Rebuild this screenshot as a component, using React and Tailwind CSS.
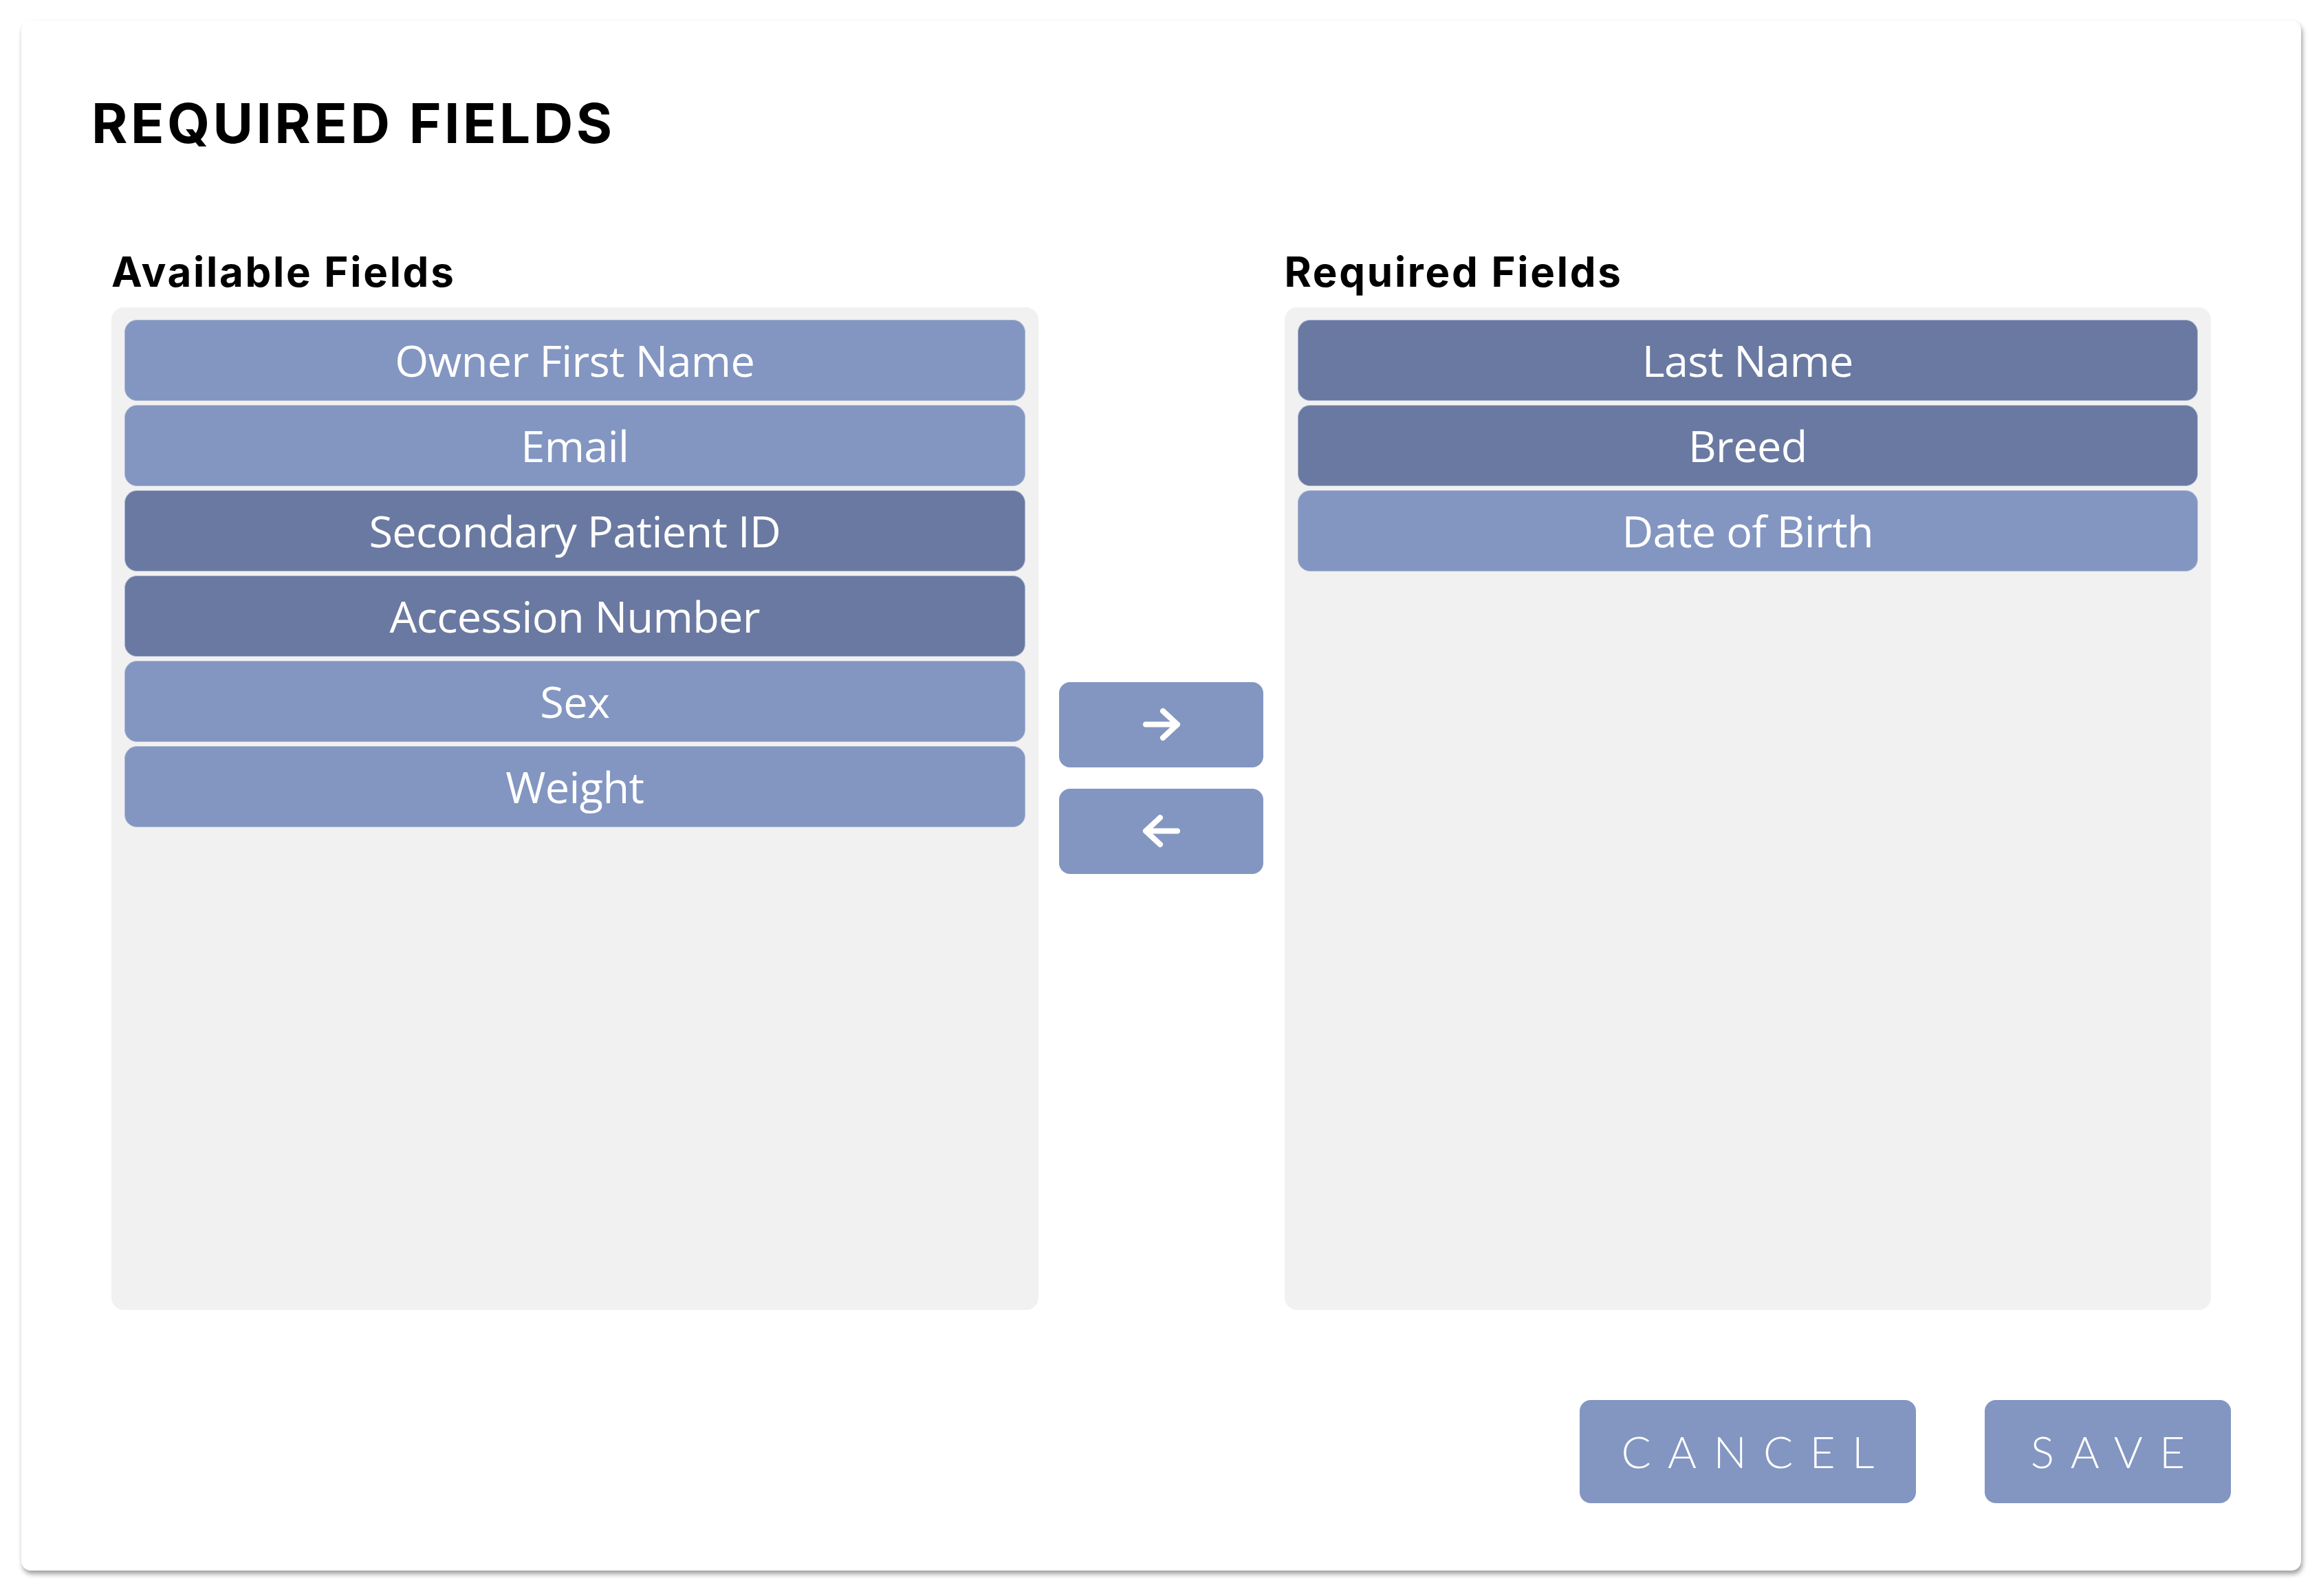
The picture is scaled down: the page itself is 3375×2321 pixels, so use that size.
import { useState } from "react";

const available = [
  { label: "Owner First Name", selected: false },
  { label: "Email", selected: false },
  { label: "Secondary Patient ID", selected: true },
  { label: "Accession Number", selected: true },
  { label: "Sex", selected: false },
  { label: "Weight", selected: false },
];

const required = [
  { label: "Last Name", selected: true },
  { label: "Breed", selected: true },
  { label: "Date of Birth", selected: false },
];

const headFont = { fontFamily: "Inter, 'Liberation Sans', sans-serif" };
const itemFont = { fontFamily: "'Open Sans', 'Noto Sans', sans-serif" };
const btnFont = { fontFamily: "Lato, 'Open Sans', sans-serif" };

function FieldList({ items }) {
  return (
    <div className="h-[1458px] rounded-[18px] bg-[#f1f1f1] px-[19px] pt-[18px] flex flex-col gap-[6px]">
      {items.map((it) => (
        <div
          key={it.label}
          className={`h-[118px] shrink-0 rounded-[18px] border border-[#aab6d3] flex items-center justify-center text-white text-[63px] tracking-[-0.01em] ${
            it.selected ? "bg-[#6a79a1]" : "bg-[#8396c1]"
          }`}
          style={itemFont}
        >
          {it.label}
        </div>
      ))}
    </div>
  );
}

function Arrow({ dir }) {
  const d =
    dir === "right"
      ? "M4 23.5 H50 M29 4 L50 23.5 L29 43"
      : "M50 23.5 H4 M25 4 L4 23.5 L25 43";
  return (
    <svg width="54" height="47" viewBox="0 0 54 47" className="overflow-visible">
      <path
        d={d}
        fill="none"
        stroke="white"
        strokeWidth="8"
        strokeLinecap="round"
        strokeLinejoin="round"
      />
    </svg>
  );
}

export default function App() {
  const [left] = useState(available);
  const [right] = useState(required);

  return (
    <div className="min-h-screen bg-white pt-[30px] pl-[31px]">
      <div className="w-[3315px] h-[2254px] rounded-[14px] bg-white shadow-[2px_5px_7px_rgba(0,0,0,0.38)] px-[102px] pt-[109px] flex flex-col">
        <h1 className="text-[80px] leading-none font-bold tracking-[0.055em] text-black" style={headFont}>
          REQUIRED FIELDS
        </h1>

        <div className="mt-[146px] px-[29px] grid grid-cols-[1fr_358px_1fr]">
          <h2 className="text-[60px] leading-none font-bold tracking-[0.045em] text-black mb-[22px]" style={headFont}>
            Available Fields
          </h2>
          <div />
          <h2 className="text-[60px] leading-none font-bold tracking-[0.045em] text-black mb-[22px]" style={headFont}>
            Required Fields
          </h2>

          <FieldList items={left} />
          <div className="flex flex-col items-center justify-center gap-[31px] pb-[90px]">
            <button className="w-[297px] h-[124px] rounded-[16px] bg-[#8396c1] flex items-center justify-center">
              <Arrow dir="right" />
            </button>
            <button className="w-[297px] h-[124px] rounded-[16px] bg-[#8396c1] flex items-center justify-center">
              <Arrow dir="left" />
            </button>
          </div>
          <FieldList items={right} />
        </div>

        <div className="mt-[131px] flex justify-end gap-[100px]">
          <button
            className="w-[489px] h-[150px] rounded-[16px] bg-[#8396c1] text-white text-[64px] font-light tracking-[0.38em] pl-[0.38em] flex items-center justify-center"
            style={btnFont}
          >
            CANCEL
          </button>
          <button
            className="w-[358px] h-[150px] rounded-[16px] bg-[#8396c1] text-white text-[64px] font-light tracking-[0.38em] pl-[0.38em] flex items-center justify-center"
            style={btnFont}
          >
            SAVE
          </button>
        </div>
      </div>
    </div>
  );
}
